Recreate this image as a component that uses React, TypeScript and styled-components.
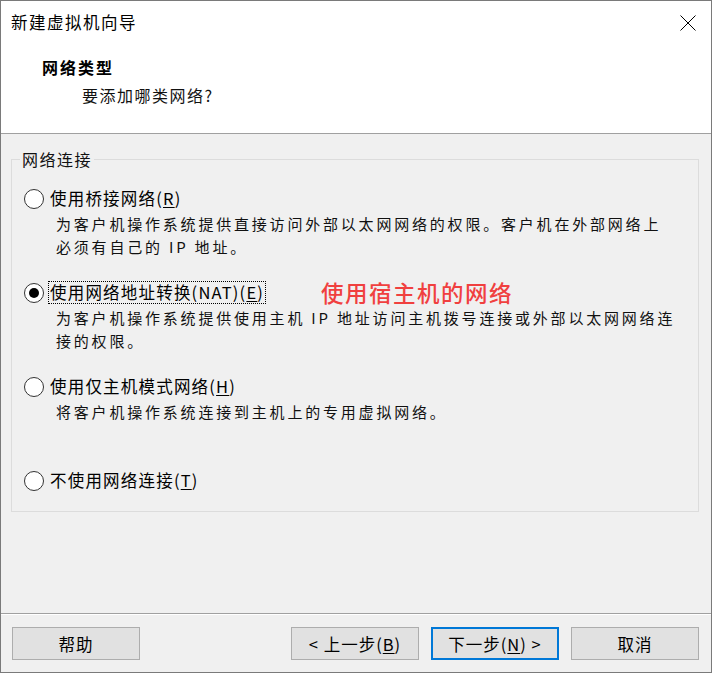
import styled, { createGlobalStyle } from 'styled-components';

const GlobalStyle = createGlobalStyle`
  html, body {
    margin: 0;
    padding: 0;
    background: #f0f0f0;
  }
  body {
    font-family: "Noto Sans CJK SC", "Noto Sans", sans-serif;
    color: #000;
  }
  * {
    box-sizing: border-box;
  }
`;

const Window = styled.div`
  width: 712px;
  height: 673px;
  border: 1px solid #7a7a7a;
  display: flex;
  flex-direction: column;
  background: #f0f0f0;
  overflow: hidden;
`;

const TitleBar = styled.div`
  height: 43px;
  flex-shrink: 0;
  background: #fff;
  display: flex;
  align-items: center;
  justify-content: space-between;
  padding: 0 15px 0 10px;
`;

const Title = styled.span`
  font-size: 16.5px;
  letter-spacing: 1.5px;
  line-height: 23px;
`;

const CloseButton = styled.button`
  border: none;
  background: transparent;
  padding: 0;
  width: 16px;
  height: 16px;
  display: flex;
  cursor: pointer;
`;

const Header = styled.div`
  height: 90px;
  flex-shrink: 0;
  background: #fff;
  border-bottom: 1px solid #a0a0a0;
  padding: 12px 0 0 41px;
`;

const HeaderTitle = styled.div`
  font-size: 16px;
  font-weight: 700;
  letter-spacing: 2px;
  line-height: 23px;
`;

const HeaderSubtitle = styled.div`
  margin: 5px 0 0 40px;
  font-size: 16px;
  letter-spacing: 1.5px;
  line-height: 23px;
  color: #111;
`;

const Body = styled.div`
  flex: 1;
  padding: 14px 12px 0 10px;
`;

const GroupBox = styled.fieldset`
  margin: 0;
  min-width: 0;
  border: 1px solid #dcdcdc;
  padding: 16px 12px 19px 12px;
  display: flex;
  flex-direction: column;
  gap: 23px;
`;

const GroupLabel = styled.legend`
  margin-left: -4px;
  padding: 0 2px;
  font-size: 16px;
  letter-spacing: 1.5px;
  line-height: 23px;
  color: #111;
`;

const Option = styled.div`
  display: flex;
  flex-direction: column;
`;

const OptionRow = styled.div`
  display: flex;
  align-items: center;
  height: 23px;
`;

const Radio = styled.span<{ $checked?: boolean }>`
  width: 20px;
  height: 20px;
  border-radius: 50%;
  border: 1px solid #333;
  background: #fff;
  display: flex;
  align-items: center;
  justify-content: center;
  margin-right: 4px;
  flex-shrink: 0;

  &::after {
    content: '';
    width: 10px;
    height: 10px;
    border-radius: 50%;
    background: ${p => (p.$checked ? '#000' : 'transparent')};
  }
`;

const OptionLabel = styled.span<{ $focused?: boolean }>`
  border: 1px dotted ${p => (p.$focused ? '#000' : 'transparent')};
  padding: 0 1px;
  font-size: 16.5px;
  letter-spacing: 1.2px;
  line-height: 21px;
  white-space: nowrap;
`;

const Key = styled.span`
  text-decoration: underline;
  text-underline-offset: 2px;
`;

const Description = styled.div`
  margin: 2px 0 0 32px;
  min-height: 46px;
  font-size: 15px;
  letter-spacing: 2.8px;
  line-height: 23px;
  color: #111;
  white-space: nowrap;
`;

const Annotation = styled.span`
  margin-left: 55px;
  font-size: 22.5px;
  font-weight: 500;
  letter-spacing: 1.5px;
  line-height: 23px;
  color: #f0403f;
  white-space: nowrap;
`;

const Footer = styled.div`
  flex-shrink: 0;
  border-top: 1px solid #a0a0a0;
  box-shadow: inset 0 1px 0 #fff;
  padding: 13px 12px 12px 11px;
  display: flex;
  gap: 12px;
`;

const Spacer = styled.div`
  flex: 1;
`;

const Button = styled.button<{ $primary?: boolean }>`
  width: 128px;
  height: 33px;
  background: #e1e1e1;
  border: ${p => (p.$primary ? '2px solid #0078d7' : '1px solid #adadad')};
  font-family: "Noto Sans CJK SC", "Noto Sans", sans-serif;
  font-size: 16.5px;
  letter-spacing: 1px;
  color: #000;
  padding: 0;
  display: flex;
  align-items: center;
  justify-content: center;
  cursor: pointer;
`;

const options = [
  {
    label: <>使用桥接网络(<Key>R</Key>)</>,
    desc: ['为客户机操作系统提供直接访问外部以太网网络的权限。客户机在外部网络上', '必须有自己的 IP 地址。'],
  },
  {
    label: <>使用网络地址转换(NAT)(<Key>E</Key>)</>,
    desc: ['为客户机操作系统提供使用主机 IP 地址访问主机拨号连接或外部以太网网络连', '接的权限。'],
    checked: true,
    note: '使用宿主机的网络',
  },
  {
    label: <>使用仅主机模式网络(<Key>H</Key>)</>,
    desc: ['将客户机操作系统连接到主机上的专用虚拟网络。'],
  },
  {
    label: <>不使用网络连接(<Key>T</Key>)</>,
  },
];

export default function App() {
  return (
    <>
      <GlobalStyle />
      <Window>
        <TitleBar>
          <Title>新建虚拟机向导</Title>
          <CloseButton aria-label="关闭">
            <svg width="16" height="16" viewBox="0 0 16 16">
              <path d="M0.5 0.5 L15.5 15.5 M15.5 0.5 L0.5 15.5" stroke="#000" strokeWidth="1" fill="none" />
            </svg>
          </CloseButton>
        </TitleBar>
        <Header>
          <HeaderTitle>网络类型</HeaderTitle>
          <HeaderSubtitle>要添加哪类网络?</HeaderSubtitle>
        </Header>
        <Body>
          <GroupBox>
            <GroupLabel>网络连接</GroupLabel>
            {options.map((o, i) => (
              <Option key={i}>
                <OptionRow>
                  <Radio $checked={o.checked} />
                  <OptionLabel $focused={o.checked}>{o.label}</OptionLabel>
                  {o.note && <Annotation>{o.note}</Annotation>}
                </OptionRow>
                {o.desc && (
                  <Description>
                    {o.desc.map((line, j) => (
                      <div key={j}>{line}</div>
                    ))}
                  </Description>
                )}
              </Option>
            ))}
          </GroupBox>
        </Body>
        <Footer>
          <Button>帮助</Button>
          <Spacer />
          <Button>&lt; 上一步(<Key>B</Key>)</Button>
          <Button $primary>下一步(<Key>N</Key>) &gt;</Button>
          <Button>取消</Button>
        </Footer>
      </Window>
    </>
  );
}
